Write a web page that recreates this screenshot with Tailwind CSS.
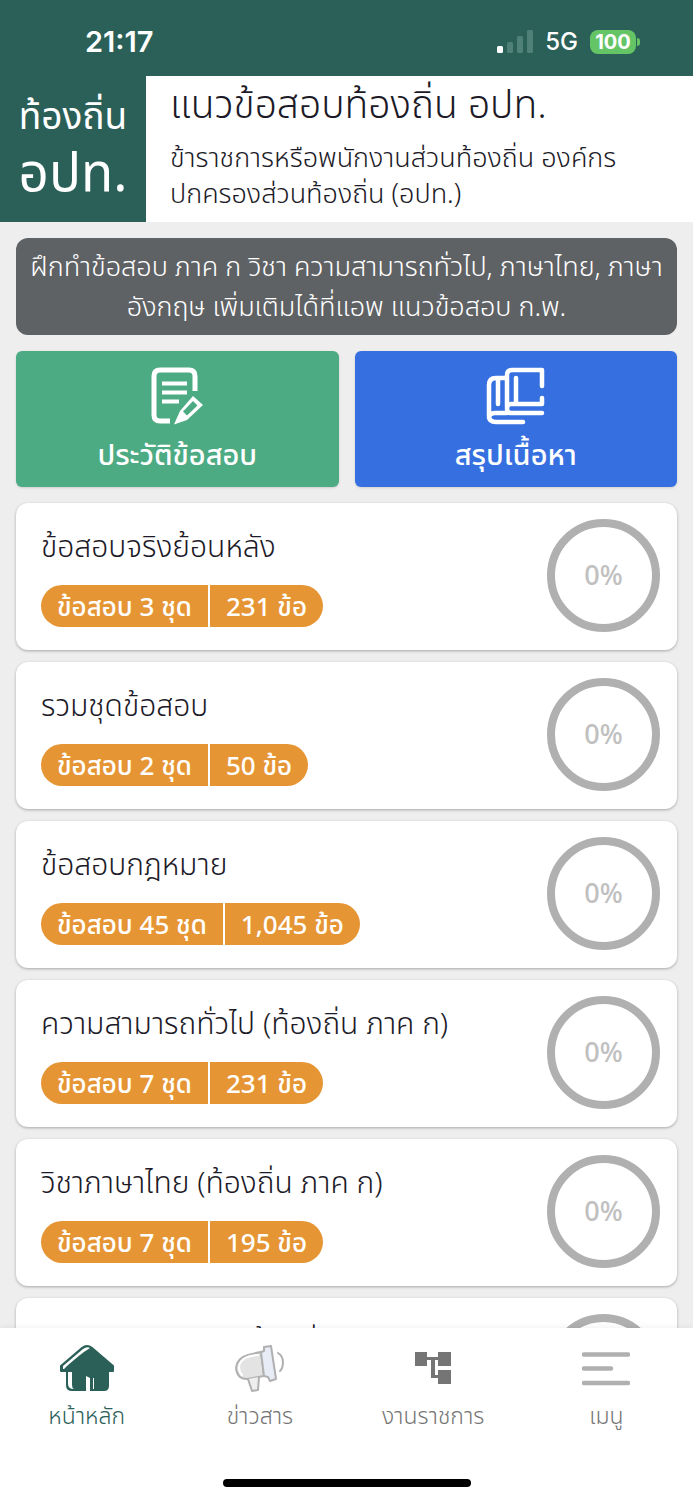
<!DOCTYPE html>
<html lang="th">
<head>
<meta charset="utf-8">
<meta name="viewport" content="width=device-width, initial-scale=1">
<title>แนวข้อสอบท้องถิ่น อปท.</title>
<script src="https://cdn.jsdelivr.net/npm/@tailwindcss/browser@4"></script>
</head>
<body class="h-screen flex flex-col overflow-hidden bg-[#eeeeee] text-[#1c1a27] font-['Noto_Sans','Noto_Sans_Thai',sans-serif] font-light">
<div class="h-[76px] shrink-0 bg-[#2b6058] text-white flex items-center justify-between pl-[85px] pr-[53px] pt-2 font-['Inter',sans-serif]">
  <span class="text-[29px] leading-8 font-semibold">21:17</span>
  <div class="flex items-center gap-3">
    <svg class="w-9 h-6" viewBox="0 0 36 24"><rect x="0" y="16" width="6" height="7" rx="1.5" fill="#fff"/><g fill="#4f8179"><rect x="10" y="12" width="6" height="11" rx="1.5"/><rect x="20" y="6" width="6" height="17" rx="1.5"/><rect x="30" y="0" width="6" height="23" rx="1.5"/></g></svg>
    <span class="text-2xl leading-8 font-medium">5G</span>
    <span class="flex items-center gap-px"><span class="w-[46px] h-6 rounded-lg bg-[#65c466] text-center text-xl leading-6 font-bold">100</span><span class="w-[3px] h-2 rounded-r-full bg-[#65c466]"></span></span>
  </div>
</div>
<header class="shrink-0 flex bg-white">
  <div class="w-[146px] h-[146px] shrink-0 bg-[#2b6058] text-white flex flex-col items-center pt-2">
    <span class="text-[37px] leading-[62px] font-normal">ท้องถิ่น</span>
    <span class="text-[53px] leading-[50px] font-normal">อปท.</span>
  </div>
  <div class="pl-6 flex-1">
    <h1 class="text-[39px] leading-[54px]">แนวข้อสอบท้องถิ่น อปท.</h1>
    <p class="text-[27px] leading-9 pt-[9px]">ข้าราชการหรือพนักงานส่วนท้องถิ่น องค์กร<br>ปกครองส่วนท้องถิ่น (อปท.)</p>
  </div>
</header>
<main class="flex-1 min-h-0 overflow-y-auto [scrollbar-width:none] px-4 pt-4">
  <p class="rounded-xl bg-[#5f6265] text-white text-center text-[27px] leading-10 py-2 h-[97px]">ฝึกทำข้อสอบ ภาค ก วิชา ความสามารถทั่วไป, ภาษาไทย, ภาษา<br>อังกฤษ เพิ่มเติมได้ที่แอพ แนวข้อสอบ ก.พ.</p>
  <div class="grid grid-cols-2 gap-4 mt-4 text-white text-[29px] leading-10 font-medium">
    <button class="h-[136px] rounded-md bg-[#4dab83] shadow flex flex-col items-center pt-4">
      <svg class="w-[60px] h-[60px]" viewBox="-2 0 60 60" fill="none" stroke="#fff" stroke-width="5"><path d="M46 24V9Q46 3 40 3H11Q5 3 5 9V48Q5 54 11 54H21"/><path stroke-width="4" d="M13 16.500H38M13 25.500H38M13 34.500H30"/><path fill="#fff" fill-rule="evenodd" stroke="none" d="M44 29 54 38 38 53 25 57.500 31 44ZM44 34 34 44.500 38 48.500 48.500 38.500Z"/></svg>
      <span class="pt-[7px]">ประวัติข้อสอบ</span>
    </button>
    <button class="h-[136px] rounded-md bg-[#3670e0] shadow flex flex-col items-center pt-4">
      <svg class="w-[60px] h-[60px]" viewBox="0 0 60 60" fill="none" stroke="#fff" stroke-width="4.500" stroke-linecap="round" stroke-linejoin="round"><path d="M56 19V3H26Q21 3 21 8V40M56 31V37H25Q21 37 21 41.500T25 46H56M21 11H10Q3 11 3 18V49Q3 55 10 55H37M12 11V37M30 11V37M21 46H9Q3 46 3 51"/></svg>
      <span class="pt-[7px]">สรุปเนื้อหา</span>
    </button>
  </div>
  <section id="list" class="mt-4 flex flex-col gap-3"></section>
</main>
<nav class="shrink-0 h-[172px] bg-white shadow-[0_-1px_6px_rgba(0,0,0,0.06)] relative">
  <div class="grid grid-cols-4 pt-4 text-[23px] leading-[42px] text-[#757575]">
    <a href="#" class="flex flex-col items-center gap-0.5 text-[#2b6058]">
      <svg class="w-[54px] h-12" viewBox="0 0 54 48"><path fill="#2b6058" stroke="#2b6058" stroke-width="2" stroke-linejoin="round" d="M1 22 22 4Q27 0 32 4L53 22V27H48V42Q48 46 44 46H12Q7 46 7 41V27H1Z"/><path fill="#fff" d="M3 22 23 5Q27 2 30 4L27 6Q23 8 7 22L4 25H3ZM8 28H12V41Q12 44 14 45Q8 45 8 40ZM26 32 30 34V48H26Z"/><path stroke="#fff" d="M33.500 34V45"/></svg>
      <span>หน้าหลัก</span>
    </a>
    <a href="#" class="flex flex-col items-center gap-0.5">
      <svg class="w-[50px] h-12" viewBox="0 0 50 48" stroke="#b0b0b0" stroke-width="2" stroke-linejoin="round" stroke-linecap="round"><path fill="#e3e3e3" d="M26 8Q20 9 13 11Q2 14 1 24Q2 35 12 35L29 32Z"/><path fill="none" stroke="#fff" d="M23 11Q5 12 4 23Q4 28 7 31"/><path fill="#e8ecf7" d="M26 8 29 7V3L36 2 41 35 35 37 33 33 29 32Z"/><path fill="#eee" d="M13 35 17 47 23 46 24 33"/><path fill="none" d="M43 9Q48 12 48 18T45 27"/></svg>
      <span>ข่าวสาร</span>
    </a>
    <a href="#" class="flex flex-col items-center gap-0.5">
      <svg class="w-9 h-12" viewBox="0 0 36 48" fill="#757575"><path d="M0 8H12V13H23V8H36V22H23V16H20V31H23V26H36V40H23V34H16V16H12V22H0Z"/></svg>
      <span>งานราชการ</span>
    </a>
    <a href="#" class="flex flex-col items-center gap-0.5">
      <svg class="w-12 h-12" viewBox="0 0 48 48" stroke="#b0b0b0" stroke-width="4.500" stroke-linecap="round"><path d="M2 10.500H46M2 24.500H29M2 39H46"/></svg>
      <span>เมนู</span>
    </a>
  </div>
  <div class="absolute bottom-[13px] left-1/2 -translate-x-1/2 w-[248px] h-2 rounded-full bg-black"></div>
</nav>
<template id="card">
  <article class="h-[147px] shrink-0 bg-white rounded-xl shadow-[0_1px_3px_rgba(0,0,0,0.3)] flex justify-between pl-[25px] pr-[17px] pt-4">
    <div>
      <h2 class="text-[30px] leading-[54px]"></h2>
      <div class="mt-3 inline-flex h-[42px] rounded-full overflow-hidden bg-[#e69534] text-white text-[26px] leading-[42px] font-medium divide-x-2 divide-white"><span class="px-4"></span><span class="px-4"></span></div>
    </div>
    <div class="w-[113px] h-[113px] rounded-full border-8 border-[#b0b0b0] flex items-center justify-center text-[27px] text-[#c0c0c0] font-medium">0%</div>
  </article>
</template>
<script>
[["ข้อสอบจริงย้อนหลัง","3","231"],["รวมชุดข้อสอบ","2","50"],["ข้อสอบกฎหมาย","45","1,045"],["ความสามารถทั่วไป (ท้องถิ่น ภาค ก)","7","231"],["วิชาภาษาไทย (ท้องถิ่น ภาค ก)","7","195"],["วิชาภาษาอังกฤษ (ท้องถิ่น ภาค ก)"]].forEach(([t,a,b])=>{
  const c=document.getElementById("card").content.cloneNode(true);
  c.querySelector("h2").textContent=t;
  const s=c.querySelectorAll("span");
  if(a){
    s[0].textContent="ข้อสอบ "+a+" ชุด";
    s[1].textContent=b+" ข้อ";
  }else s[0].parentNode.remove();
  document.getElementById("list").append(c);
});
</script>
</body>
</html>
